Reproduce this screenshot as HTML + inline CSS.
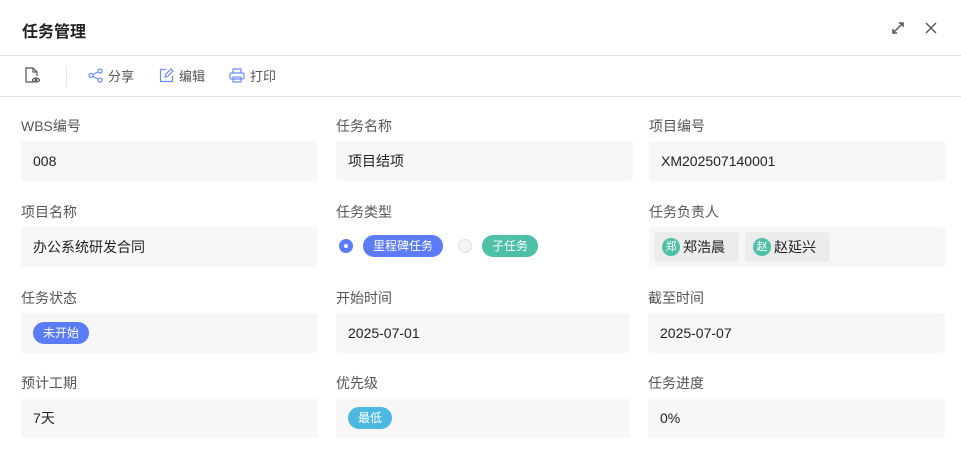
<!DOCTYPE html>
<html><head><meta charset="utf-8"><style>
*{box-sizing:border-box;margin:0;padding:0}
body{width:961px;height:464px;background:#fff;font-family:"Liberation Sans","Noto Sans CJK SC",sans-serif;color:#333;position:relative;overflow:hidden}
.title{position:absolute;left:22px;top:18px;font-size:16px;font-weight:bold;color:#222}
.hl{position:absolute;left:0;width:961px;height:1px;background:#e4e4e4}
.tb{position:absolute;top:66px;font-size:13px;color:#555;display:flex;align-items:center;gap:5px}
.lab{position:absolute;font-size:14px;color:#555}
.box{position:absolute;height:40px;width:297px;background:#f7f7f7;border-radius:3px;font-size:14px;color:#222;display:flex;align-items:center;padding-left:12px}
.tag{display:inline-block;height:22px;line-height:22px;border-radius:11px;color:#fff;font-size:12px;padding:0 10px}
.per{display:inline-flex;align-items:center;height:30px;background:#ececec;border-radius:3px;padding:0 14px 0 8px;margin-right:6px;font-size:14px}
.av{width:18px;height:18px;border-radius:50%;background:#4fc0a8;color:#fff;font-size:11px;line-height:18px;text-align:center;margin-right:3px}
</style></head><body>
<div class="title">任务管理</div>
<svg style="position:absolute;left:891px;top:21px" width="14" height="14" viewBox="0 0 14 14" fill="none" stroke="#555" stroke-width="1.5"><path d="M2 12L12 2M8 2h4v4M2 8v4h4"/></svg>
<svg style="position:absolute;left:925px;top:22px" width="12" height="12" viewBox="0 0 12 12" stroke="#555" stroke-width="1.4"><path d="M1 1L11 11M11 1L1 11"/></svg>
<div class="hl" style="top:55px"></div>
<div class="hl" style="top:96px"></div>
<svg style="position:absolute;left:24px;top:67px" width="17" height="17" viewBox="0 0 17 17" fill="none" stroke="#555" stroke-width="1.2"><path d="M10 15H2V1h7l4 4v4"/><path d="M9 1v4h4"/><ellipse cx="12" cy="13" rx="3.5" ry="2"/><circle cx="12" cy="13" r="0.8"/></svg>
<div style="position:absolute;left:66px;top:67px;width:1px;height:20px;background:#e4e4e4"></div>
<div class="tb" style="left:88px"><svg width="15" height="15" viewBox="0 0 15 15" fill="none" stroke="#6b8cf5" stroke-width="1.2"><circle cx="12" cy="3" r="2"/><circle cx="3" cy="7.5" r="2"/><circle cx="12" cy="12" r="2"/><path d="M5 6.5l5-2.5M5 8.5l5 2.5"/></svg>分享</div>
<div class="tb" style="left:159px"><svg width="15" height="15" viewBox="0 0 15 15" fill="none" stroke="#6b8cf5" stroke-width="1.2"><path d="M7 1.5H1.5v12h12V8"/><path d="M6 9l.5-2.5L12 1l2 2-5.5 5.5z"/></svg>编辑</div>
<div class="tb" style="left:229px"><svg width="16" height="15" viewBox="0 0 16 15" fill="none" stroke="#6b8cf5" stroke-width="1.2"><path d="M4 5V1h8v4"/><rect x="1" y="5" width="14" height="6" rx="1.5"/><rect x="4" y="9" width="8" height="5"/></svg>打印</div>

<div class="lab" style="left:21px;top:116px">WBS编号</div>
<div class="box" style="left:21px;top:141px">008</div>
<div class="lab" style="left:336px;top:116px">任务名称</div>
<div class="box" style="left:336px;top:141px">项目结项</div>
<div class="lab" style="left:649px;top:116px">项目编号</div>
<div class="box" style="left:649px;top:141px">XM202507140001</div>

<div class="lab" style="left:21px;top:202px">项目名称</div>
<div class="box" style="left:21px;top:227px">办公系统研发合同</div>
<div class="lab" style="left:336px;top:202px">任务类型</div>
<div style="position:absolute;left:339px;top:235px;display:flex;align-items:center">
<span style="width:14px;height:14px;border-radius:50%;background:#5b7cf6;display:inline-block;position:relative"><span style="position:absolute;left:5px;top:5px;width:4px;height:4px;border-radius:50%;background:#fff"></span></span>
<span class="tag" style="background:#5b7cf6;margin-left:10px">里程碑任务</span>
<span style="width:14px;height:14px;border-radius:50%;background:#f3f4f8;border:1px solid #dde0e8;display:inline-block;margin-left:15px"></span>
<span class="tag" style="background:#4fc0a8;margin-left:10px">子任务</span></div>
<div class="lab" style="left:649px;top:202px">任务负责人</div>
<div class="box" style="left:649px;top:227px;padding-left:5px"><span class="per"><span class="av">郑</span>郑浩晨</span><span class="per"><span class="av">赵</span>赵延兴</span></div>

<div class="lab" style="left:21px;top:288px">任务状态</div>
<div class="box" style="left:21px;top:313px"><span class="tag" style="background:#5b7cf6">未开始</span></div>
<div class="lab" style="left:336px;top:288px">开始时间</div>
<div class="box" style="left:336px;top:313px;width:294px">2025-07-01</div>
<div class="lab" style="left:648px;top:288px">截至时间</div>
<div class="box" style="left:648px;top:313px">2025-07-07</div>

<div class="lab" style="left:21px;top:373px">预计工期</div>
<div class="box" style="left:21px;top:398px">7天</div>
<div class="lab" style="left:336px;top:373px">优先级</div>
<div class="box" style="left:336px;top:398px;width:294px"><span class="tag" style="background:#4db8e0">最低</span></div>
<div class="lab" style="left:648px;top:373px">任务进度</div>
<div class="box" style="left:648px;top:398px">0%</div>
</body></html>
